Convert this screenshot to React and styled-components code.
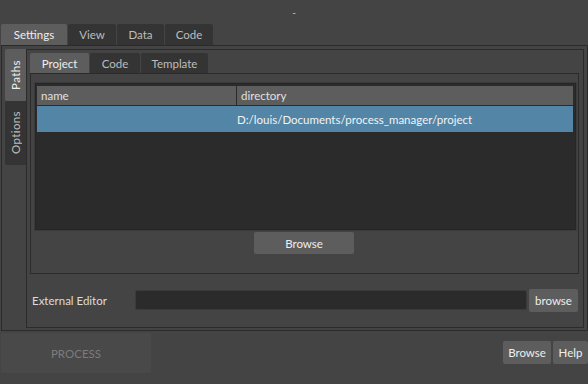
import React from 'react';
import styled, { createGlobalStyle } from 'styled-components';

const GlobalStyle = createGlobalStyle`
    html, body {
        margin: 0;
        padding: 0;
        background: #444444;
    }
    * {
        box-sizing: border-box;
    }
`

const Window = styled.div`
    width: 588px;
    height: 384px;
    background: #444444;
    font-family: Lato, "Noto Sans", sans-serif;
    font-size: 11.5px;
    color: #dddddd;
    display: flex;
    flex-direction: column;
    overflow: hidden;
`
const TitleBar = styled.div`
    height: 24px;
    display: flex;
    justify-content: center;
    align-items: center;
    color: #c8c8c8;
    font-size: 10px;
`
const TabRow = styled.div`
    display: flex;
    gap: 1px;
    height: ${p => p.$height}px;
    padding-left: ${p => p.$inset || 0}px;
    flex-shrink: 0;
`
const Tab = styled.div`
    display: flex;
    align-items: center;
    justify-content: center;
    width: ${p => p.$width}px;
    border-radius: 2px 2px 0 0;
    background: ${p => (p.$active ? '#5d5d5d' : '#343434')};
    color: ${p => (p.$active ? '#eeeeee' : '#bdbdbd')};
    white-space: nowrap;
`
const Frame = styled.div`
    margin-left: 1px;
    width: 587px;
    height: 286px;
    border: 1px solid #2b2b2b;
    padding: 3px 3px 2px 3px;
    display: flex;
    flex-shrink: 0;
`
const SideTabs = styled.div`
    width: 21px;
    display: flex;
    flex-direction: column;
    flex-shrink: 0;
`
const SideTab = styled.div`
    height: ${p => p.$height}px;
    display: flex;
    align-items: center;
    justify-content: center;
    border-radius: 2px 0 0 2px;
    background: ${p => (p.$active ? '#5d5d5d' : '#343434')};
    color: ${p => (p.$active ? '#eeeeee' : '#bdbdbd')};
    span {
        writing-mode: vertical-rl;
        transform: rotate(180deg);
        white-space: nowrap;
        letter-spacing: 0.4px;
    }
`
const Pane = styled.div`
    flex: 1;
    border: 1px solid #2b2b2b;
    padding: 3px 4px 0 3px;
    display: flex;
    flex-direction: column;
`
const TabPanel = styled.div`
    height: 201px;
    border: 1px solid #2b2b2b;
    padding: 9px 2px 0 4px;
    display: flex;
    flex-direction: column;
`
const Table = styled.div`
    height: 147px;
    border: 1px solid #262626;
    box-shadow: 0 0 0 1px #3b3b3b;
    background: #2b2b2b;
    padding: 2px 2px 2px 1px;
`
const Row = styled.div`
    display: grid;
    grid-template-columns: 200px 1fr;
    height: ${p => (p.$header ? 20 : 26)}px;
    background: ${p => (p.$header ? '#5d5d5d' : p.$selected ? '#5285a6' : 'transparent')};
    border-bottom: ${p => (p.$header ? '1px solid #2b2b2b' : 'none')};
`
const Cell = styled.div`
    display: flex;
    align-items: center;
    min-width: 0;
    padding-left: ${p => (p.$header ? 4 : 0)}px;
    border-right: ${p => (p.$divider ? '1px solid #2b2b2b' : 'none')};
    color: ${p => (p.$header ? '#e0e0e0' : '#f2f2f2')};
    white-space: nowrap;
    overflow: hidden;
`
const Button = styled.div`
    display: flex;
    align-items: center;
    justify-content: center;
    width: ${p => p.$width}px;
    height: ${p => p.$height || 23}px;
    background: #5d5d5d;
    color: #eeeeee;
    border-radius: 2px;
    flex-shrink: 0;
`
const CenteredButton = styled(Button)`
    align-self: center;
    margin-top: 2px;
    margin-right: 3px;
`
const EditorRow = styled.div`
    flex: 1;
    display: flex;
    align-items: center;
    padding: 0 1px 1px 2px;
`
const Label = styled.div`
    width: 103px;
    color: #dcdcdc;
    flex-shrink: 0;
`
const TextInput = styled.div`
    flex: 1;
    height: 20px;
    background: #2b2b2b;
    border: 1px solid #3a3a3a;
    border-radius: 2px;
    margin-right: 2px;
`
const BottomBar = styled.div`
    flex: 1;
    display: flex;
    align-items: flex-start;
    padding: 2px 0 0 1px;
`
const ProcessButton = styled.div`
    width: 150px;
    height: 40px;
    display: flex;
    align-items: center;
    justify-content: center;
    background: #494949;
    color: #7c7c7c;
    border-radius: 1px;
`
const ButtonGroup = styled.div`
    margin-left: auto;
    margin-top: 8px;
    display: flex;
    gap: 2px;
`

export default function App() {
    return (
        <>
            <GlobalStyle />
            <Window>
                <TitleBar>-</TitleBar>
                <TabRow $height={21} $inset={1}>
                    <Tab $active $width={66}>Settings</Tab>
                    <Tab $width={48}>View</Tab>
                    <Tab $width={47}>Data</Tab>
                    <Tab $width={48}>Code</Tab>
                </TabRow>
                <Frame>
                    <SideTabs>
                        <SideTab $active $height={52}><span>Paths</span></SideTab>
                        <SideTab $height={64}><span>Options</span></SideTab>
                    </SideTabs>
                    <Pane>
                        <TabRow $height={20}>
                            <Tab $active $width={59}>Project</Tab>
                            <Tab $width={50}>Code</Tab>
                            <Tab $width={67}>Template</Tab>
                        </TabRow>
                        <TabPanel>
                            <Table>
                                <Row $header>
                                    <Cell $header $divider>name</Cell>
                                    <Cell $header>directory</Cell>
                                </Row>
                                <Row $selected>
                                    <Cell />
                                    <Cell>D:/louis/Documents/process_manager/project</Cell>
                                </Row>
                            </Table>
                            <CenteredButton $width={100} $height={22}>Browse</CenteredButton>
                        </TabPanel>
                        <EditorRow>
                            <Label>External Editor</Label>
                            <TextInput />
                            <Button $width={49}>browse</Button>
                        </EditorRow>
                    </Pane>
                </Frame>
                <BottomBar>
                    <ProcessButton>PROCESS</ProcessButton>
                    <ButtonGroup>
                        <Button $width={48}>Browse</Button>
                        <Button $width={35}>Help</Button>
                    </ButtonGroup>
                </BottomBar>
            </Window>
        </>
    )
}
